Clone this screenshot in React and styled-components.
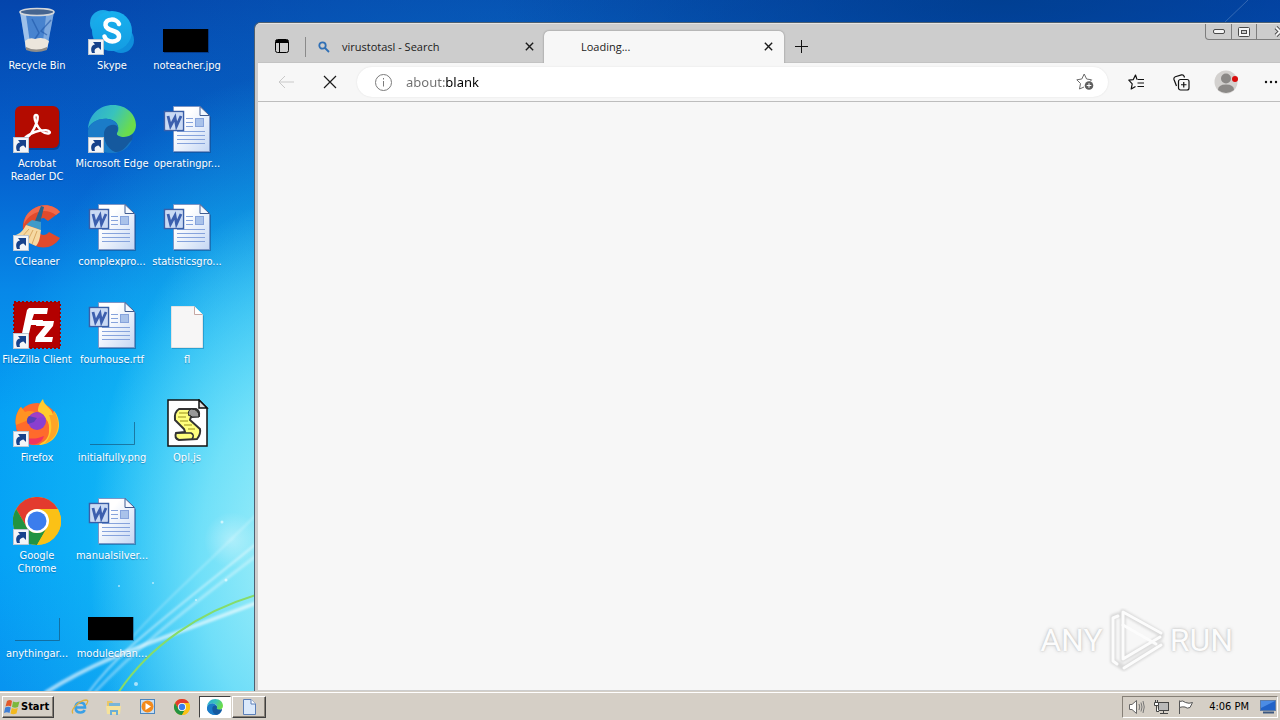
import React, { useState } from 'react';
import styled, { createGlobalStyle, css } from 'styled-components';

const desktopItems = [
  { name: 'Recycle Bin', icon: 'bin' },
  { name: 'Acrobat Reader DC', icon: 'acrobat', shortcut: true },
  { name: 'CCleaner', icon: 'ccleaner', shortcut: true },
  { name: 'FileZilla Client', icon: 'filezilla', shortcut: true },
  { name: 'Firefox', icon: 'firefox', shortcut: true },
  { name: 'Google Chrome', icon: 'chrome', shortcut: true },
  { name: 'anythingar...', icon: 'clearThumb' },
  { name: 'Skype', icon: 'skype', shortcut: true },
  { name: 'Microsoft Edge', icon: 'edge', shortcut: true },
  { name: 'complexpro...', icon: 'word' },
  { name: 'fourhouse.rtf', icon: 'word' },
  { name: 'initialfully.png', icon: 'clearThumb' },
  { name: 'manualsilver...', icon: 'word' },
  { name: 'modulechan...', icon: 'blackThumb' },
  { name: 'noteacher.jpg', icon: 'blackThumb' },
  { name: 'operatingpr...', icon: 'word' },
  { name: 'statisticsgro...', icon: 'word' },
  { name: 'fl', icon: 'file' },
  { name: 'Opl.js', icon: 'script' }
];

const drawings = {
  bin: (
    <>
      <path d="M7 5 L13 42 Q23 47 34 42 L41 5 Z" fill="#7fb2e8" fillOpacity="0.55" />
      <path d="M7 5 L13 42 L18 43 L13 8 Z" fill="#d8ebfb" fillOpacity="0.6" />
      <path d="M41 5 L34 42 L29 43 L33 9 Z" fill="#cfe3f7" fillOpacity="0.4" />
      <path d="M19 12 L26 26 L22 32 M38 13 L28 24 L34 28" stroke="#1f56a8" strokeWidth="1.5" fill="none" strokeOpacity="0.6" />
      <path d="M12 34 Q16 30 22 32 Q30 29 36 34 L34 42 Q23 46 13 42 Z" fill="#ece6dc" />
      <path d="M13 40 Q23 45 34 40 L34 43 Q23 47 13 43 Z" fill="#8f8c88" />
      <ellipse cx="24" cy="5" rx="17" ry="3.5" fill="#46658f" stroke="#d4d7da" strokeWidth="1.6" />
    </>
  ),
  acrobat: (
    <>
      <rect x="3" y="2" width="44" height="43" rx="6" fill="#00183c" fillOpacity="0.35" />
      <rect x="2" y="1" width="44" height="42" rx="6" fill="#b30b00" />
      <path
        d="M12 33 C16 33 21 25 23.500 18 C25.500 12.500 25 10 23 10 C21 10 21 13.500 23 18 C26 25 31 29 35.500 28.500 C38 28 37 25.500 33 25.200 C27 25 19 27.500 14 31 C11 33 11 35 12 33 Z"
        fill="none" stroke="#fff" strokeWidth="2.400" strokeLinejoin="round"
      />
    </>
  ),
  ccleaner: (
    <>
      <path d="M47 9 C41 1 28 0 20 6 C9 13 7 27 14 36 C22 47 39 48 47 35 L36 29 C33 33 28 33 26 29 C22 23 25 15 31 15 L35 18 Z" fill="#e04a2c" />
      <path d="M47 9 C41 1 28 0 20 6 C14 10 11 15 11 21 C17 9 32 4 43 12 Z" fill="#f06a4c" />
      <path d="M28 3 L31 4 L27 20 L22 18 Z" fill="#24648f" />
      <path d="M19 17 L28 19 L28 27 L13 22 Q16 19 19 17 Z" fill="#3f9bc9" />
      <path d="M13 22 L28 27 C27 35 26 40 23 43 L0 33 C7 31 10 28 13 22 Z" fill="#f6d9a2" />
      <path d="M16 26 L8 35 M20 27 L14 39 M24 28 L19 41" stroke="#d9a863" strokeWidth="1" />
    </>
  ),
  filezilla: (
    <>
      <rect x="1" y="1" width="46" height="46" fill="#b30000" />
      <rect x="1" y="1" width="46" height="46" fill="none" stroke="#a00000" strokeWidth="2" strokeDasharray="2 2" />
      <path d="M16 7 L35 7 L34 13 L21 13 L19 19 L30 19 L29 24 L18 24 L15 37 L8 37 L14 9 Z" fill="#fff" />
      <path d="M24 20 L41 20 L40 25 L31 36 L40 36 L39 41 L22 41 L23 36 L32 25 L23 25 Z" fill="#fff" />
    </>
  ),
  firefox: (
    <>
      <circle cx="24" cy="25" r="21" fill="#ff6a2c" />
      <path d="M30 0 C26 5 25 8 25 12 L33 20 C39 27 36 38 26 46 C37 46 46 37 46 26 C46 20 44 15 41 12 L40 16 C39 9 31 7 30 0 Z" fill="#ffcb2d" />
      <path d="M41 12 C49 24 45 40 31 45 C39 37 40 26 36 16 L40 16 Z" fill="#ffa526" />
      <path d="M3 27 C1 18 5 11 8 8 L12 13 C16 11 20 12 23 14 C17 17 16 20 19 22 L14 27 C17 36 30 37 35 28 C39 38 30 46 20 46 C10 45 4 36 3 27 Z" fill="#ff6b2b" />
      <path d="M3 26 C2 18 5 11 8 8 L12 13 C16 11 20 12 23 14 L13 22 Z" fill="#ff9322" />
      <path d="M3 28 C7 40 19 42 31 37 C27 50 7 49 3 28 Z" fill="#f2335d" />
      <circle cx="24" cy="22" r="9" fill="#8a3fd0" />
      <path d="M15 21 C17 13 28 11 33 20 C29 17 25 18 22 22 Z" fill="#a13fc4" />
      <path d="M16 17 L24 19 L21 23 L15 25 C13 22 14 19 16 17 Z" fill="#5840b8" />
    </>
  ),
  chrome: (
    <>
      <circle cx="24" cy="24" r="24" fill="#fbc116" />
      <path d="M3.200 12 A24 24 0 0 1 44.800 12 L24 12 A12 12 0 0 0 13.600 18 L13.600 30 Z" fill="#e33b2e" />
      <path d="M3.200 12 L13.600 30 A12 12 0 0 0 34.400 30 L24 48 A24 24 0 0 1 3.200 12 Z" fill="#229342" />
      <path d="M44.800 12 L24 12 A12 12 0 0 1 34.400 30 L24 48 A24 24 0 0 0 44.800 12 Z" fill="#fbc116" />
      <circle cx="24" cy="24" r="12" fill="#fff" />
      <circle cx="24" cy="24" r="9.500" fill="#3b7ded" />
    </>
  ),
  skype: (
    <>
      <circle cx="15" cy="16" r="13" fill="#1ba8e8" />
      <circle cx="33" cy="33" r="13" fill="#0f8fdc" />
      <circle cx="24" cy="24" r="20" fill="url(#skypeFill)" />
      <path d="M31 17 C29 11 17 11 17.500 18 C18 25 31 22 31 29.500 C31 36 18 36 16.500 29.500" fill="none" stroke="#fff" strokeWidth="4.500" strokeLinecap="round" />
    </>
  ),
  edge: (
    <>
      <path d="M0 26 C2 16 10 13 20 14 L44 35 C41 43 34 48 24 48 C11 48 -1 38 0 26 Z" fill="#1676c4" />
      <path d="M0 24 C1 10 11 0 25 0 C39 0 48 10 48 20 C48 28 42 32 36 32 C31 32 28 30 29 28 C32 25 31 15 20 14 C10 13 2 18 0 24 Z" fill="url(#edgeTop)" />
      <path d="M0 26 C2 18 10 13 20 14 C26 15 30 18 30 23 C24 17 15 22 16 31 C17 39 23 45 30 47 C13 51 -1 40 0 26 Z" fill="#1b7cc8" />
      <path d="M16 29 C16 23 21 19 27 20 C31 21 30 25 29 28 C28 30 31 32 36 32 C40 32 43 31 45 29 L44 35 C43 36 42 37 41 38 C38 42 33 48 27 47 C20 44 16 37 16 29 Z" fill="#15599e" />
    </>
  ),
  word: (
    <>
      <path d="M11 3 L38 3 L48 12 L48 48 L11 48 Z" fill="#1c3f77" fillOpacity="0.45" />
      <path d="M10.500 1.500 L37 1.500 L46.500 10.500 L46.500 46.500 L10.500 46.500 Z" fill="url(#pageFill)" stroke="#7d96c6" />
      <path d="M37 1.500 L46.500 10.500 L37 10.500 Z" fill="#f4f8fe" stroke="#415d92" />
      <path d="M23 13.500 H30 M23 17.500 H30 M23 21.500 H30 M14 26.500 H42 M14 30.500 H42 M14 34.500 H42 M14 38.500 H42" stroke="#86a3dc" />
      <rect x="32.500" y="13.500" width="8" height="8" fill="#a9c2ea" stroke="#86a3dc" />
      <rect x="1.500" y="6.500" width="19" height="19" fill="#e6eefb" stroke="#3a5fa8" strokeWidth="1.500" />
      <rect x="3" y="8" width="16" height="16" fill="#c9daf5" />
      <path d="M5 11 L7.500 21 L12 12.500 L13.500 21 L18 11" fill="none" stroke="#3c5fae" strokeWidth="2.800" />
    </>
  ),
  file: (
    <>
      <path d="M9 7 L33 7 L41 15 L41 48 L9 48 Z" fill="#0b6ca0" fillOpacity="0.4" />
      <path d="M8.500 5.500 L31 5.500 L39.500 13.500 L39.500 46.500 L8.500 46.500 Z" fill="#f7f6f6" stroke="#e3e3e3" />
      <path d="M31.500 5.500 L31.500 13.500 L39.500 13.500" fill="#fff" stroke="#c6a8a4" />
    </>
  ),
  script: (
    <>
      <path d="M5 1 L36 1 L44 9 L44 47 L5 47 Z" fill="#fff" stroke="#111" strokeWidth="1.500" />
      <path d="M36 1 L36 9 L44 9 Z" fill="#ddd" stroke="#111" strokeWidth="1.500" />
      <path d="M16 10 L33 10 Q37 12 36 17 L28 18 L27 21 L37 30 Q38 35 34 40 L16 41 Q11 39 13 34 L22 33 L21 30 L12 21 Q11 13 16 10 Z" fill="#ffff7d" stroke="#333" strokeWidth="2" />
      <path d="M16 14 H25 M15 18 H23 M17 22 H25 M21 26 H29 M25 30 H32" stroke="#998f1b" />
      <path d="M28 10 Q36 10 36 18 L29 18 Q27 15 26 17 Q24 12 28 10 Z" fill="#999" stroke="#222" />
      <path d="M13 34 H28 Q32 36 29 40" fill="none" stroke="#333" strokeWidth="1.500" />
    </>
  ),
  blackThumb: (
    <>
      <rect x="1" y="22" width="45" height="24" fill="#002" fillOpacity="0.3" />
      <rect x="0" y="22" width="45" height="23" fill="#000" />
    </>
  ),
  clearThumb: <path d="M2 45.500 H46.500 V23" fill="none" stroke="#155a80" strokeOpacity="0.7" />
};

function Shortcut() {
  return (
    <g>
      <rect x="0.500" y="32.500" width="15" height="15" fill="#f3f5f8" stroke="#bcc6d2" />
      <path d="M4 46 C2 41 4 38 7 37.500 L5 35 L13 35 L13 43 L10.500 40.500 C7 41 6 43 7 46 Z" fill="#17428b" />
    </g>
  );
}

function Wallpaper() {
  return (
    <WallpaperArt viewBox="0 0 1280 720" preserveAspectRatio="xMinYMin slice" aria-hidden="true">
      <defs>
        <linearGradient id="edgeTop" x1="0" y1="0" x2="1" y2="0.400">
          <stop offset="0" stopColor="#2ba6d6" />
          <stop offset="0.550" stopColor="#38c3bd" />
          <stop offset="1" stopColor="#6bdc4c" />
        </linearGradient>
        <linearGradient id="skypeFill" x1="0" y1="0" x2="0" y2="1">
          <stop offset="0" stopColor="#18b0ee" />
          <stop offset="1" stopColor="#149ce2" />
        </linearGradient>
        <linearGradient id="pageFill" x1="0" y1="0" x2="1" y2="1">
          <stop offset="0.300" stopColor="#fff" />
          <stop offset="1" stopColor="#c5d7f4" />
        </linearGradient>
        <radialGradient id="glow">
          <stop offset="0" stopColor="#fff" stopOpacity="0.350" />
          <stop offset="1" stopColor="#fff" stopOpacity="0" />
        </radialGradient>
        <filter id="soft" x="-20%" y="-20%" width="140%" height="140%">
          <feGaussianBlur stdDeviation="1" />
        </filter>
      </defs>
      <g fill="none" stroke="#fff">
        <path d="M45 693 C105 655 160 640 256 603" strokeWidth="4" strokeOpacity="0.600" filter="url(#soft)" />
        <path d="M88 693 C120 650 150 630 256 544" strokeWidth="2" strokeOpacity="0.500" filter="url(#soft)" />
        <path d="M94 693 C130 655 165 625 256 556" strokeWidth="3" strokeOpacity="0.350" filter="url(#soft)" />
        <path d="M130 640 C155 610 185 585 256 515" strokeWidth="2" strokeOpacity="0.250" filter="url(#soft)" />
        <path d="M1224 23 L1248 0" strokeOpacity="0.200" />
      </g>
      <path d="M118 693 C150 645 200 612 256 595" fill="none" stroke="#86dc6a" strokeWidth="2" />
      <g fill="#fff" fillOpacity="0.600">
        <circle cx="222" cy="522" r="1.500" />
        <circle cx="226" cy="580" r="1.500" />
        <circle cx="119" cy="586" r="1" />
        <circle cx="153" cy="583" r="1" />
        <circle cx="136" cy="684" r="2" />
        <circle cx="196" cy="600" r="1" />
      </g>
      <circle cx="232" cy="540" r="28" fill="url(#glow)" />
    </WallpaperArt>
  );
}

function SearchIcon() {
  return (
    <svg width="12" height="12" viewBox="0 0 12 12" fill="none" stroke="#2f6fb5" strokeWidth="1.800">
      <circle cx="4.500" cy="4.500" r="3.200" />
      <path d="M7 7 L11 11" />
    </svg>
  );
}

function Cross({ size }) {
  return (
    <svg width={size} height={size} viewBox="0 0 12 12" fill="none" stroke="#1b1b1b" strokeWidth="1.500">
      <path d="M2 2 L10 10 M10 2 L2 10" />
    </svg>
  );
}

function BrowserWindow() {
  const [address, setAddress] = useState('about:blank');

  return (
    <Window>
      <TabStrip>
        <TabActions aria-label="Tab actions">
          <svg width="14" height="14" viewBox="0 0 14 14" fill="none" stroke="#000">
            <rect x="0.500" y="0.500" width="13" height="13" rx="2" />
            <path d="M4.500 4 V13" />
            <path d="M1 2.500 H13" strokeWidth="3" />
          </svg>
        </TabActions>
        <Divider />
        <Tab>
          <SearchIcon />
          <TabTitle>virustotasl - Search</TabTitle>
          <CloseTab aria-label="Close tab"><Cross size={11} /></CloseTab>
        </Tab>
        <Tab $active>
          <TabTitle>Loading...</TabTitle>
          <CloseTab aria-label="Close tab"><Cross size={11} /></CloseTab>
        </Tab>
        <NewTab aria-label="New tab">
          <svg width="13" height="13" viewBox="0 0 13 13" stroke="#111">
            <path d="M6.500 0 V13 M0 6.500 H13" />
          </svg>
        </NewTab>
        <CaptionButtons>
          <CaptionButton aria-label="Minimize">
            <svg width="12" height="5" viewBox="0 0 12 5">
              <rect x="0.500" y="0.500" width="11" height="4" rx="1.500" fill="#f4f4f4" stroke="#4a4a4a" />
            </svg>
          </CaptionButton>
          <CaptionButton aria-label="Restore">
            <svg width="12" height="10" viewBox="0 0 12 10" fill="#f4f4f4" stroke="#4a4a4a">
              <rect x="0.500" y="0.500" width="11" height="9" rx="1" />
              <rect x="3.500" y="3.500" width="5" height="3" fill="#ccc" />
            </svg>
          </CaptionButton>
          <CaptionButton $wide aria-label="Close">
            <svg width="14" height="11" viewBox="0 0 14 11" fill="none">
              <path d="M3 1.500 L11 9.500 M11 1.500 L3 9.500" stroke="#4a4a4a" strokeWidth="4" />
              <path d="M3 1.500 L11 9.500 M11 1.500 L3 9.500" stroke="#f4f4f4" strokeWidth="2" />
            </svg>
          </CaptionButton>
        </CaptionButtons>
      </TabStrip>

      <Toolbar>
        <ToolButton aria-label="Back" disabled>
          <svg width="17" height="14" viewBox="0 0 17 14" fill="none" stroke="#c9c9c9">
            <path d="M16 7 H1 M7 1 L1 7 L7 13" />
          </svg>
        </ToolButton>
        <ToolButton aria-label="Stop">
          <svg width="14" height="14" viewBox="0 0 14 14" stroke="#1b1b1b" strokeWidth="1.200">
            <path d="M1 1 L13 13 M13 1 L1 13" />
          </svg>
        </ToolButton>
        <AddressBar>
          <svg width="17" height="17" viewBox="0 0 17 17" fill="none" stroke="#7b7b7b">
            <circle cx="8.500" cy="8.500" r="8" />
            <path d="M8.500 7 V12.500 M8.500 4 V5.500" />
          </svg>
          <AddressInput
            type="text"
            aria-label="Address"
            spellCheck="false"
            value={address}
            onChange={e => setAddress(e.target.value)}
          />
          <AddFavorite aria-label="Add this page to favorites">
            <svg width="18" height="18" viewBox="0 0 18 18" fill="none" stroke="#6b6b6b">
              <path d="M8 14 L3.500 16 L4.500 10.500 L0.800 6.800 L5.800 6 L8.200 1 L10.600 6 L15.600 6.800 L14 8.500" strokeLinejoin="round" />
              <circle cx="13" cy="12.500" r="4.300" fill="#5f5f5f" stroke="none" />
              <path d="M13 10.200 V14.800 M10.700 12.500 H15.300" stroke="#fff" />
            </svg>
          </AddFavorite>
        </AddressBar>
        <ToolButton $wide aria-label="Favorites">
          <svg width="17" height="16" viewBox="0 0 17 16" fill="none" stroke="#111" strokeWidth="1.200">
            <path d="M9 5.500 L7.500 1 L5.300 5.600 L0.800 6.200 L4.200 9.800 L3.200 15 L7.500 12.500" strokeLinejoin="round" />
            <path d="M9.500 5.500 H16 M9.500 9 H16 M9.500 12.500 H16" />
          </svg>
        </ToolButton>
        <ToolButton aria-label="Collections">
          <svg width="17" height="17" viewBox="0 0 17 17" fill="none" stroke="#111" strokeWidth="1.200">
            <path d="M3.500 12 L1 5.500 Q0.500 3.500 2.300 2.800 L8.500 0.900 Q10.500 0.500 11.200 2.500 L11.500 3.500" />
            <rect x="5.500" y="5.500" width="10.500" height="10.500" rx="2" />
            <path d="M10.750 8 V13.500 M8 10.750 H13.500" />
          </svg>
        </ToolButton>
        <ToolButton $wide aria-label="Profile">
          <svg width="24" height="24" viewBox="0 0 24 24">
            <circle cx="12" cy="12" r="11.500" fill="#d3d1cf" />
            <circle cx="12" cy="8.500" r="5" fill="#8b8987" />
            <path d="M4 20 Q4 14.500 12 14.500 Q20 14.500 20 20 Q12 26 4 20 Z" fill="#8b8987" />
            <circle cx="21" cy="9" r="3" fill="#d80d0d" />
          </svg>
        </ToolButton>
        <ToolButton $wide aria-label="Settings and more">
          <svg width="14" height="4" viewBox="0 0 14 4" fill="#111">
            <circle cx="2" cy="2" r="1.200" />
            <circle cx="7" cy="2" r="1.200" />
            <circle cx="12" cy="2" r="1.200" />
          </svg>
        </ToolButton>
      </Toolbar>

      <Page />
    </Window>
  );
}

function Watermark() {
  return (
    <Brand>
      <span>ANY</span>
      <svg width="57" height="64" viewBox="0 0 57 64" fill="none" strokeLinejoin="round" strokeLinecap="round">
        <g stroke="#dadada" strokeWidth="6" filter="url(#soft)">
          <path d="M11 7 L5 9 V53 L16 60 L53 37" />
          <path d="M15 4 L53 26 L52 30 L15 51 Z" />
        </g>
        <g stroke="#fcfcfc" strokeWidth="3">
          <path d="M10 8 L5 10 V53 L9 56" />
          <path d="M16 60 L53 37" />
          <path d="M52 29 L15 51 V4 L53 25" />
          <path d="M15 17 L48 36" />
        </g>
      </svg>
      <span>RUN</span>
    </Brand>
  );
}

function Taskbar() {
  return (
    <Bar>
      <StartButton>
        <svg width="16" height="16" viewBox="0 0 16 16">
          <path d="M3 2 Q6 0 8 2 L7 7.500 Q4.500 6 1.500 7.500 Z" fill="#e2592b" />
          <path d="M9 2.500 Q12 4 15.500 2.500 L14 8 Q11 9.500 8 8 Z" fill="#7cb83c" />
          <path d="M1.200 8.500 Q4.500 7 6.800 8.500 L5.500 14 Q3 12.500 0 14 Z" fill="#3f7fd6" />
          <path d="M7.800 9 Q10.500 10.500 13.800 9 L12.500 14.500 Q9 16 6.500 14.500 Z" fill="#f2b91f" />
        </svg>
        Start
      </StartButton>

      <QuickLaunch>
        <TaskButton aria-label="Internet Explorer">
          <svg width="18" height="18" viewBox="0 0 18 18" fill="none">
            <path d="M4.500 9.500 H14 Q14 4.500 9.300 4.500 Q4.500 4.700 4.500 9.800 Q5 14.500 9.500 14.500 Q12.500 14.500 13.700 12" stroke="#3aa0e6" strokeWidth="2.600" />
            <path d="M2 15.500 C-1 12 8 2.500 15 2 C18 2 16.500 5 15 7" stroke="#e0b03c" strokeWidth="1.300" />
          </svg>
        </TaskButton>
        <TaskButton aria-label="Windows Explorer">
          <svg width="18" height="18" viewBox="0 0 18 18">
            <path d="M2 3 H7 L8 5 H15 V15 H2 Z" fill="#e9c767" />
            <path d="M4 5 H15 V8 H4 Z" fill="#78b6d8" />
            <path d="M1 8 H16 L15 16 H2 Z" fill="#f5e29a" />
            <path d="M5 17 V12 H13 V17 H11 V14 H7 V17 Z" fill="#6aaed6" />
          </svg>
        </TaskButton>
        <TaskButton aria-label="Windows Media Player">
          <svg width="18" height="18" viewBox="0 0 18 18">
            <rect x="1.500" y="1.500" width="14" height="14" fill="#c8def2" stroke="#4a86bf" />
            <circle cx="8.500" cy="8.500" r="6" fill="#f28a1c" />
            <path d="M6.500 5 L12 8.500 L6.500 12 Z" fill="#fff" />
          </svg>
        </TaskButton>
        <TaskButton aria-label="Google Chrome">
          <svg width="16" height="16" viewBox="0 0 48 48">{drawings.chrome}</svg>
        </TaskButton>
        <TaskButton $state="pressed" aria-label="Microsoft Edge">
          <svg width="16" height="16" viewBox="0 0 48 48">{drawings.edge}</svg>
        </TaskButton>
        <TaskButton $state="raised" aria-label="Document">
          <svg width="14" height="16" viewBox="0 0 14 16">
            <path d="M1.500 0.500 H9 L13.500 5 V15.500 H1.500 Z" fill="#dbe9fb" stroke="#5b7fb8" />
            <path d="M9 0.500 V5 H13.500" fill="#fff" stroke="#5b7fb8" />
          </svg>
        </TaskButton>
      </QuickLaunch>

      <Tray>
        <TrayButton aria-label="Volume">
          <svg width="18" height="16" viewBox="0 0 18 16" fill="none" stroke="#666">
            <path d="M1.500 5.500 H4 L8.500 1.500 V14.500 L4 10.500 H1.500 Z" fill="#fff" />
            <path d="M11 5 Q12.500 8 11 11 M13 3.500 Q15 8 13 12.500 M15 2 Q17.500 8 15 14" stroke="#777" />
          </svg>
        </TrayButton>
        <TrayButton aria-label="Network">
          <svg width="17" height="16" viewBox="0 0 17 16" fill="#fff" stroke="#444">
            <rect x="5.500" y="3.500" width="10" height="8" fill="#b9b9b9" />
            <path d="M7 14.500 H15 M10.500 12 V14" />
            <path d="M1.500 3.500 H5.500 V6.500 H1.500 Z M2.500 1 V3 M4.500 1 V3 M3.500 7 V12.500 H6" />
          </svg>
        </TrayButton>
        <TrayButton aria-label="Action Center">
          <svg width="17" height="16" viewBox="0 0 17 16" fill="#fff" stroke="#555">
            <path d="M2.500 1.500 V15" />
            <path d="M2.500 2.500 Q6 1 8.500 3.500 Q12 5 15.500 3.500 L13 8.500 Q10 10 8 8 Q5 7.500 2.500 8.500 Z" />
          </svg>
        </TrayButton>
        <Clock>4:06 PM</Clock>
        <svg width="16" height="14" viewBox="0 0 16 14">
          <rect x="0.500" y="0.500" width="15" height="10" fill="#2263c8" stroke="#5d7ca8" />
          <path d="M1 1 H15 L1 8 Z" fill="#4c8ce4" />
          <path d="M3 12.500 H14" stroke="#3c5880" strokeWidth="2" />
        </svg>
      </Tray>
    </Bar>
  );
}

function App() {
  return (
    <Screen>
      <GlobalStyle />
      <Desktop>
        <Wallpaper />
        <IconGrid>
          {desktopItems.map(item => (
            <DesktopIcon key={item.name}>
              <svg width="48" height="48" viewBox="0 0 48 48">
                {drawings[item.icon]}
                {item.shortcut && <Shortcut />}
              </svg>
              <IconLabel>{item.name}</IconLabel>
            </DesktopIcon>
          ))}
        </IconGrid>
        <BrowserWindow />
        <Watermark />
      </Desktop>
      <Taskbar />
    </Screen>
  );
}

const GlobalStyle = createGlobalStyle`
  * {
    box-sizing: border-box;
  }

  body {
    margin: 0;
    font-family: 'DejaVu Sans Condensed', 'DejaVu Sans', sans-serif;
    font-size: 11px;
  }

  button {
    padding: 0;
    border: 0;
    background: none;
    color: inherit;
    font: inherit;
  }

  svg {
    display: block;
    flex-shrink: 0;
  }
`;

const Screen = styled.div`
  display: flex;
  flex-direction: column;
  min-height: 100vh;
`;

const Desktop = styled.main`
  position: relative;
  flex: 1;
  overflow: hidden;
  background:
    radial-gradient(ellipse 200px 360px at 290px 560px, rgba(175, 242, 248, 0.9), rgba(150, 238, 250, 0.7) 45%, rgba(120, 230, 250, 0) 100%),
    radial-gradient(ellipse 330px 450px at 310px 520px, rgba(35, 205, 248, 1), rgba(25, 195, 246, 0.7) 50%, rgba(20, 180, 240, 0) 100%),
    radial-gradient(ellipse 500px 120px at 1000px 0, rgba(0, 62, 140, 0.8), rgba(0, 62, 140, 0) 100%),
    radial-gradient(ellipse 500px 320px at 500px 100px, rgba(10, 105, 190, 0.6), rgba(10, 105, 190, 0) 100%),
    linear-gradient(#0445ac, #0563d0 25%, #0788e8 42%, #05a0f4 60%, #04a0f6 80%, #0894f0);
`;

const WallpaperArt = styled.svg`
  position: absolute;
  inset: 0;
  width: 100%;
  height: 100%;
`;

const IconGrid = styled.div`
  position: relative;
  display: grid;
  grid-auto-flow: column;
  grid-template-rows: repeat(7, 98px);
  grid-auto-columns: 74px;
  column-gap: 1px;
`;

const DesktopIcon = styled.button`
  display: flex;
  flex-direction: column;
  align-items: center;
  gap: 4px;
  padding-top: 7px;
  color: #fff;
`;

const IconLabel = styled.span`
  line-height: 13px;
  text-align: center;
  text-shadow: 0 1px 1px rgba(0, 50, 110, 0.4);
`;

const Window = styled.section`
  position: absolute;
  top: 23px;
  right: -24px;
  bottom: 0;
  left: 255px;
  display: flex;
  flex-direction: column;
  border: solid #cdcdcd;
  border-width: 0 0 2px 3px;
  border-radius: 5px 0 0 0;
  outline: 1px solid #4d5f70;
  background: #f7f7f7;
  font-family: 'Open Sans', 'Noto Sans', sans-serif;
`;

const TabStrip = styled.div`
  display: flex;
  align-items: flex-end;
  height: 40px;
  padding-right: 1px;
  border-top: 1px solid #e6e4e2;
  border-bottom: 1px solid #c3c3c3;
  background: #cdcdcd;
`;

const TabActions = styled.button`
  display: grid;
  place-items: center;
  width: 47px;
  height: 32px;
`;

const Divider = styled.span`
  align-self: center;
  width: 1px;
  height: 20px;
  margin-top: 8px;
  background: #8a8a8a;
`;

const Tab = styled.div`
  display: flex;
  align-items: center;
  gap: 12px;
  width: 238px;
  height: 31px;
  padding: 0 7px 0 12px;
  border-radius: 5px 5px 0 0;
  color: #1b1b1b;

  ${({ $active }) => $active && css`
    width: 240px;
    height: 32px;
    margin-bottom: -1px;
    padding: 0 8px 2px 37px;
    background: #f7f7f7;
    box-shadow: 0 0 2px rgba(0, 0, 0, 0.4);
    clip-path: inset(-3px -3px 0 -3px);
  `}
`;

const TabTitle = styled.span`
  flex: 1;
  white-space: nowrap;
`;

const CloseTab = styled.button`
  display: grid;
  place-items: center;
  width: 16px;
  height: 16px;
`;

const NewTab = styled.button`
  display: grid;
  place-items: center;
  width: 34px;
  height: 31px;
`;

const CaptionButtons = styled.div`
  display: flex;
  align-self: flex-start;
  height: 16px;
  margin-left: auto;
  border: 1px solid #7d7d7d;
  border-top: 0;
  border-radius: 0 0 4px 4px;
`;

const CaptionButton = styled.button`
  display: grid;
  place-items: center;
  width: ${({ $wide }) => ($wide ? '46px' : '25px')};

  & + & {
    border-left: 1px solid #7d7d7d;
  }
`;

const Toolbar = styled.div`
  display: flex;
  align-items: center;
  height: 39px;
  padding: 0 11px 0 6px;
  border-bottom: 1px solid #bdbdbd;
  background: #f7f7f7;
`;

const ToolButton = styled.button`
  display: grid;
  place-items: center;
  width: ${({ $wide }) => ($wide ? '45px' : '44px')};
  height: 30px;
`;

const AddressBar = styled.div`
  display: flex;
  flex: 1;
  align-items: center;
  height: 30px;
  margin: 0 6px 0 5px;
  padding: 0 14px 0 18px;
  border-radius: 15px;
  background: #fff;
  box-shadow: 0 0 2px rgba(0, 0, 0, 0.1);
`;

const AddressInput = styled.input`
  flex: 1;
  min-width: 0;
  padding: 0 14px;
  border: 0;
  outline: 0;
  background: linear-gradient(90deg, #6e6e6e 53px, #000 53px) text;
  color: transparent;
  caret-color: #000;
  font: 13px 'Noto Sans', sans-serif;
`;

const AddFavorite = styled.button`
  display: grid;
  place-items: center;
`;

const Page = styled.div`
  flex: 1;
  background: #f7f7f7;
`;

const Brand = styled.div`
  position: absolute;
  right: 47px;
  bottom: 20px;
  display: flex;
  align-items: center;
  gap: 5px;
  color: #fcfcfc;
  font: 32px Roboto, sans-serif;
  text-shadow: 0 0 2px #bcbcbc, 0 0 4px #d0d0d0;
`;

const raised = css`
  border: 1px solid;
  border-color: #fff #404040 #404040 #fff;
  box-shadow: inset -1px -1px #868077;
`;

const Bar = styled.footer`
  position: relative;
  display: flex;
  align-items: center;
  height: 28px;
  padding: 0 2px;
  border-top: 1px solid #fff;
  background: #d5cfc6;
  box-shadow: 0 -1px #d5cfc6;
`;

const StartButton = styled.button`
  ${raised}
  display: flex;
  align-items: center;
  gap: 1px;
  width: 52px;
  height: 22px;
  padding-left: 1px;
  font-weight: bold;
`;

const QuickLaunch = styled.nav`
  display: flex;
  margin-left: 9px;
`;

const TaskButton = styled.button`
  display: grid;
  place-items: center;
  width: 34px;
  height: 22px;

  ${({ $state }) => $state === 'raised' && raised}
  ${({ $state }) => $state === 'pressed' && css`
    width: 32px;
    margin-right: 1px;
    border: 1px solid;
    border-color: #404040 #fff #fff #404040;
    background: #fff;
  `}
`;

const Tray = styled.div`
  display: flex;
  align-items: center;
  height: 22px;
  margin-left: auto;
  padding: 0 1px 0 2px;
  border: 1px solid;
  border-color: #868077 #fff #fff #868077;
`;

const TrayButton = styled.button`
  display: grid;
  place-items: center;
  width: 24px;
`;

const Clock = styled.time`
  margin: 0 11px 0 12px;
`;

export default App;
